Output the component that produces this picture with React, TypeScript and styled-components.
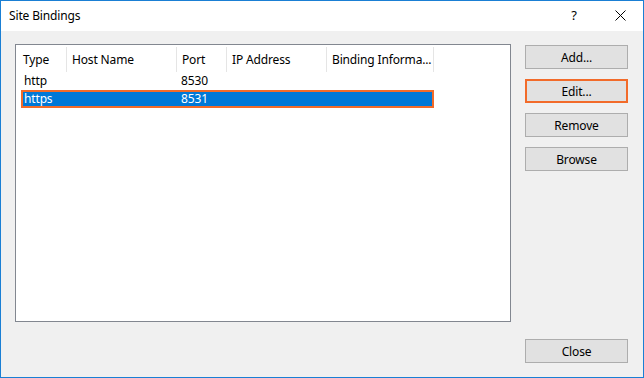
import React from "react";
import styled, { createGlobalStyle } from "styled-components";

const GlobalStyle = createGlobalStyle`
    html, body {
        margin: 0;
        padding: 0;
        background: #ffffff;
    }
    body {
        font-family: "Noto Sans", "Liberation Sans", sans-serif;
        font-size: 12px;
        color: #000000;
    }
`;

type TColumn = {
    title: string,
    width: number,
}

const columns: TColumn[] = [
    { title: "Type", width: 51 },
    { title: "Host Name", width: 110 },
    { title: "Port", width: 50 },
    { title: "IP Address", width: 100 },
    { title: "Binding Informa...", width: 107 },
];

const bindings = [
    { type: "http", host: "", port: "8530", ip: "", info: "" },
    { type: "https", host: "", port: "8531", ip: "", info: "" },
];

const CloseGlyph = () => (
    <svg width="11" height="11" viewBox="0 0 11 11">
        <path d="M0.5 0.5 L10.5 10.5 M10.5 0.5 L0.5 10.5" stroke="#000" strokeWidth="1" fill="none" />
    </svg>
);

const App = () => (
    <>
        <GlobalStyle />
        <Window>
            <TitleBar>
                <span className="title">Site Bindings</span>
                <div className="caption-buttons">
                    <CaptionButton>?</CaptionButton>
                    <CaptionButton><CloseGlyph /></CaptionButton>
                </div>
            </TitleBar>
            <DialogBody>
                <ListView>
                    <HeaderRow>
                        {columns.map((c, i) => (
                            <HeaderCell key={c.title} $width={c.width} $first={i === 0}>{c.title}</HeaderCell>
                        ))}
                    </HeaderRow>
                    {bindings.map((b, i) => (
                        <DataRow key={b.type} $selected={i === 1}>
                            <DataCell $width={columns[0].width - 5}>{b.type}</DataCell>
                            <DataCell $width={columns[1].width + 1}>{b.host}</DataCell>
                            <DataCell $width={columns[2].width + 1}>{b.port}</DataCell>
                            <DataCell $width={columns[3].width + 1}>{b.ip}</DataCell>
                            <DataCell $width={columns[4].width - 3}>{b.info}</DataCell>
                        </DataRow>
                    ))}
                </ListView>
                <SideColumn>
                    <ButtonStack>
                        <DialogButton>Add...</DialogButton>
                        <DialogButton $highlight>Edit...</DialogButton>
                        <DialogButton>Remove</DialogButton>
                        <DialogButton>Browse</DialogButton>
                    </ButtonStack>
                    <DialogButton>Close</DialogButton>
                </SideColumn>
            </DialogBody>
        </Window>
    </>
);

const Window = styled.div`
    width: 644px;
    height: 378px;
    box-sizing: border-box;
    border: 1px solid #1a7fd4;
    display: flex;
    flex-direction: column;
    background-color: #f0f0f0;
    letter-spacing: -0.15px;
`;

const TitleBar = styled.div`
    height: 30px;
    background-color: #ffffff;
    display: flex;
    align-items: center;
    justify-content: space-between;
    padding-left: 8px;

    .title {
        font-size: 12px;
        margin-top: -1px;
    }

    .caption-buttons {
        display: flex;
        height: 100%;
    }
`;

const CaptionButton = styled.div`
    width: 46px;
    height: 100%;
    display: flex;
    align-items: center;
    justify-content: center;
    font-size: 13px;
    margin-top: -1px;
`;

const DialogBody = styled.div`
    flex: 1;
    display: flex;
    column-gap: 14px;
    padding: 13px 15px 14px 14px;
`;

const ListView = styled.div`
    width: 496px;
    height: 278px;
    box-sizing: border-box;
    border: 1px solid #828790;
    background-color: #ffffff;
`;

const HeaderRow = styled.div`
    display: flex;
    height: 27px;
    padding-top: 2px;
    box-sizing: border-box;
`;

type TCell = {
    $width: number,
    $first?: boolean,
}

const HeaderCell = styled.div<TCell>`
    width: ${(p) => p.$width}px;
    box-sizing: border-box;
    border-right: 1px solid #e5e5e5;
    padding-left: ${(p) => (p.$first ? 7 : 5)}px;
    display: flex;
    align-items: center;
    white-space: nowrap;
    overflow: hidden;
`;

const DataRow = styled.div<{ $selected?: boolean }>`
    display: flex;
    height: 18px;
    box-sizing: border-box;
    width: 413px;
    margin-left: 5px;
    border: 2px solid ${(p) => (p.$selected ? "#f26b2a" : "transparent")};
    background-color: ${(p) => (p.$selected ? "#0078d7" : "transparent")};
    color: ${(p) => (p.$selected ? "#ffffff" : "#000000")};
`;

const DataCell = styled.div<TCell>`
    width: ${(p) => p.$width}px;
    flex-shrink: 0;
    box-sizing: border-box;
    padding-left: 1px;
    display: flex;
    align-items: center;
    white-space: nowrap;
    line-height: 14px;
`;

const SideColumn = styled.div`
    width: 103px;
    display: flex;
    flex-direction: column;
    justify-content: space-between;
`;

const ButtonStack = styled.div`
    display: flex;
    flex-direction: column;
    row-gap: 10px;
    margin-top: 1px;
`;

const DialogButton = styled.div<{ $highlight?: boolean }>`
    height: 24px;
    box-sizing: border-box;
    border: ${(p) => (p.$highlight ? "2px solid #f26b2a" : "1px solid #adadad")};
    background-color: #e1e1e1;
    display: flex;
    align-items: center;
    justify-content: center;
    font-size: 12px;
`;

export default App;
